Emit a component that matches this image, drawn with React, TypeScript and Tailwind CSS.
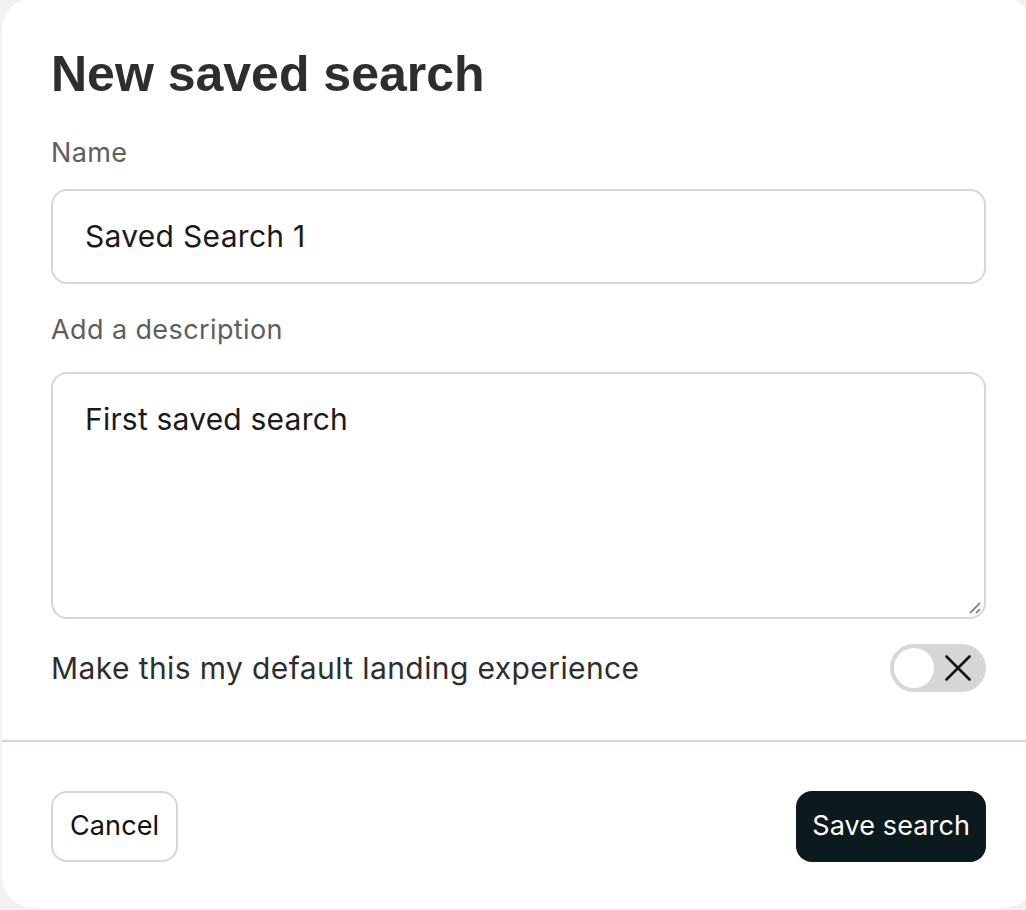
export default function App() {
    return (
        <div className="w-[1026px] h-[910px] overflow-hidden bg-[#f2f2f2]">
            <div
                className="ml-[2px] -mt-[2px] w-[1033px] h-[910px] bg-white rounded-[32px] flex flex-col"
                style={{ fontFamily: "Inter, 'Noto Sans', sans-serif" }}
            >
                <div className="px-[49px] pt-[50px] flex flex-col">
                    <h1
                        className="text-[50px] leading-[52px] font-bold text-[#2e2e2e]"
                        style={{ fontFamily: "'Liberation Sans', Arial, sans-serif" }}
                    >
                        New saved search
                    </h1>
                    <label className="mt-[36px] text-[27px] leading-[34px] tracking-[0.4px] text-[#5e5e5e]">Name</label>
                    <div className="mt-[19px] h-[95px] rounded-[16px] border-2 border-[#d6d6d6] flex items-center px-[32px]">
                        <span className="text-[30px] tracking-[0.3px] text-[#1a1a1a]">Saved Search 1</span>
                    </div>
                    <label className="mt-[29px] text-[27px] leading-[34px] tracking-[0.4px] text-[#5e5e5e]">Add a description</label>
                    <div className="relative mt-[25px] h-[247px] rounded-[16px] border-2 border-[#d6d6d6] px-[32px] pt-[26px]">
                        <span className="text-[30px] leading-[38px] tracking-[0.2px] text-[#1a1a1a]">First saved search</span>
                        <svg className="absolute right-[2px] bottom-[2px]" width="14" height="14" viewBox="0 0 14 14">
                            <path d="M2 12 L12 2 M8 12 L12 8" stroke="#6b6b6b" strokeWidth="1.5" />
                        </svg>
                    </div>
                    <div className="mt-[25px] flex items-center justify-between">
                        <span className="text-[30px] tracking-[0.4px] text-[#2e2e2e]">Make this my default landing experience</span>
                        <div className="w-[96px] h-[48px] rounded-full bg-[#d6d6d6] flex items-center justify-between pl-[4px] pr-[15px]">
                            <div className="w-[40px] h-[40px] rounded-full bg-white" />
                            <svg width="26" height="26" viewBox="0 0 26 26">
                                <path d="M1.5 1.5 L24.5 24.5 M24.5 1.5 L1.5 24.5" stroke="#151515" strokeWidth="2.6" strokeLinecap="round" />
                            </svg>
                        </div>
                    </div>
                </div>
                <div className="mt-[48px] h-[2px] bg-[#d2d2e6]" />
                <div className="px-[49px] pt-[49px] flex items-center justify-between">
                    <button className="h-[71px] px-[17px] rounded-[16px] border-2 border-[#d6d6d6] text-[27px] tracking-[0.1px] text-[#111]">
                        Cancel
                    </button>
                    <button className="h-[71px] px-[16px] rounded-[16px] bg-[#0b1a1d] text-[27px] tracking-[0.1px] text-white">
                        Save search
                    </button>
                </div>
            </div>
        </div>
    )
}
